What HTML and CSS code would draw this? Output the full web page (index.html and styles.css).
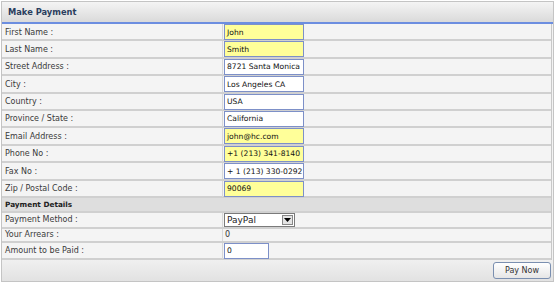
FILE: index.html
```html
<!DOCTYPE html>
<html>
<head>
<meta charset="utf-8">
<link rel="stylesheet" href="styles.css">
</head>
<body>
<div class="panel">
  <div class="head">Make Payment</div>
  <div class="rows">
    <div class="row"><div class="lbl">First Name :</div><div class="val"><span class="inp req">John</span></div></div>
    <div class="row"><div class="lbl">Last Name :</div><div class="val"><span class="inp req">Smith</span></div></div>
    <div class="row"><div class="lbl">Street Address :</div><div class="val"><span class="inp">8721 Santa Monica</span></div></div>
    <div class="row"><div class="lbl">City :</div><div class="val"><span class="inp">Los Angeles CA</span></div></div>
    <div class="row"><div class="lbl">Country :</div><div class="val"><span class="inp">USA</span></div></div>
    <div class="row"><div class="lbl">Province / State :</div><div class="val"><span class="inp">California</span></div></div>
    <div class="row"><div class="lbl">Email Address :</div><div class="val"><span class="inp req">john@hc.com</span></div></div>
    <div class="row"><div class="lbl">Phone No :</div><div class="val"><span class="inp req">+1 (213) 341-8140</span></div></div>
    <div class="row"><div class="lbl">Fax No :</div><div class="val"><span class="inp">+ 1 (213) 330-0292</span></div></div>
    <div class="row"><div class="lbl">Zip / Postal Code :</div><div class="val"><span class="inp req">90069</span></div></div>
    <div class="section">Payment Details</div>
    <div class="row pm"><div class="lbl">Payment Method :</div><div class="val"><span class="sel"><span class="seltext">PayPal</span><span class="arrow"><svg width="7" height="4" viewBox="0 0 7 4"><path d="M0 0h7L3.5 4z" fill="#000"/></svg></span></span></div></div>
    <div class="row short"><div class="lbl">Your Arrears :</div><div class="val plain">0</div></div>
    <div class="row"><div class="lbl">Amount to be Paid :</div><div class="val"><span class="inp amt">0</span></div></div>
  </div>
  <div class="foot"><span class="btn">Pay Now</span></div>
</div>
</body>
</html>
```
FILE: styles.css
```css
* { box-sizing: border-box; }
body {
  margin: 0;
  background: #fff;
  font-family: "DejaVu Sans", Verdana, sans-serif;
  font-size: 8px;
  color: #333;
}
.panel {
  margin: 1px 1px 0 1px;
  width: 553px;
  height: 281px;
  border: 1px solid #c4c4c4;
  background: #f3f3f3;
  display: flex;
  flex-direction: column;
}
.head {
  height: 22px;
  flex: none;
  padding-left: 6px;
  display: flex;
  align-items: center;
  font-weight: bold;
  font-size: 8.3px;
  color: #2b3e5e;
  background: linear-gradient(#f4f4f4, #dadada);
  border-bottom: 2px solid #6c8ee0;
}
.rows {
  border-right: 1px solid #c8c8c8;
  margin-right: 1px;
}
.row {
  display: grid;
  grid-template-columns: 221px 1fr;
  height: 17.4px;
  border-bottom: 2px solid #d0d0d0;
  background: #f4f4f4;
}
.row.pm { height: 16px; }
.row.short { height: 14px; }
.lbl {
  display: flex;
  align-items: center;
  padding-left: 3px;
  color: #3a3a3a;
  border-right: 1px solid #d8d8d8;
}
.val {
  display: flex;
  align-items: center;
  padding-left: 1px;
}
.val.plain { padding-left: 2px; }
.inp {
  width: 80px;
  height: 16px;
  border: 1px solid #7d90c8;
  background: #fff;
  padding-left: 2px;
  display: flex;
  align-items: center;
  white-space: nowrap;
  overflow: hidden;
  color: #111;
  font-size: 7.6px;
}
.inp.req { background: #ffff99; }
.inp.amt { width: 45px; }
.section {
  height: 15px;
  flex: none;
  display: flex;
  align-items: center;
  padding-left: 3px;
  font-weight: bold;
  font-size: 7.3px;
  color: #222;
  background: #dedede;
  border-bottom: 2px solid #d0d0d0;
}
.sel {
  width: 71px;
  height: 14px;
  border: 1px solid #7a7a7a;
  background: #fff;
  display: flex;
  align-items: center;
  justify-content: space-between;
  font-size: 9px;
  color: #222;
}
.seltext { padding-left: 2px; }
.arrow {
  width: 11px;
  height: 10px;
  margin-right: 1px;
  border: 1px solid #888;
  background: #e4e4e4;
  display: flex;
  align-items: center;
  justify-content: center;
}
.foot {
  flex: 1;
  display: flex;
  justify-content: flex-end;
  align-items: center;
  padding-right: 2px;
  background: linear-gradient(#f0f0f0, #e2e2e2);
}
.btn {
  width: 58px;
  height: 17px;
  border: 1px solid #7a8fb0;
  border-radius: 3px;
  background: linear-gradient(#ffffff, #e6e6e6);
  display: flex;
  align-items: center;
  justify-content: center;
  color: #333;
}
```
